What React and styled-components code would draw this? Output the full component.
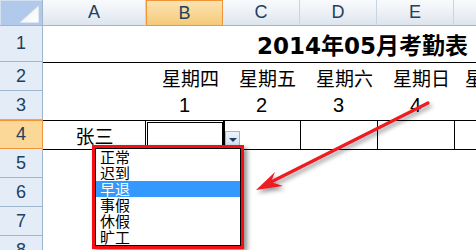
import React from "react";
import styled, { createGlobalStyle, css } from "styled-components";

const GlobalStyle = createGlobalStyle`
  html, body { margin: 0; padding: 0; background: #fff; }
  body { overflow: hidden; }
  * { box-sizing: border-box; }
`;

const Page = styled.div`
  position: relative;
  width: 476px;
  height: 250px;
  overflow: hidden;
  background: #fff;
`;

const Sheet = styled.div`
  display: grid;
  grid-template-columns: 43px 103px 77px 77px 77px 77px 100px;
  grid-template-rows: 26px 36px 29px 29px 29px 29px 29px 29px 29px;
`;

const Corner = styled.div`
  display: flex;
  align-items: flex-end;
  justify-content: flex-end;
  padding: 0 3px 2px 0;
  background: #b1c9ea;
  border-right: 1px solid #9eb6ce;
  border-bottom: 1px solid #9eb6ce;
  box-shadow: inset 1px 1px 0 #d3e0f1;
`;

const ColHeader = styled.div`
  display: flex;
  align-items: center;
  justify-content: center;
  font: 18px "Liberation Sans", Arial, sans-serif;
  color: #213f5f;
  border-right: 1px solid #c9d5e4;
  border-bottom: 1px solid #9eb6ce;
  background: linear-gradient(#f8fafc, #edf1f6 50%, #dde4ed);
  ${(p) =>
    p.$selected &&
    css`
      background: linear-gradient(#fbe2b0, #f9d796 50%, #f4c978);
      border: 1px solid #f29536;
    `}
`;

const RowHeader = styled.div`
  display: flex;
  align-items: center;
  justify-content: center;
  font: 18px "Liberation Sans", Arial, sans-serif;
  color: #213f5f;
  background: #e4ecf7;
  border-right: 1px solid #9eb6ce;
  border-bottom: 1px solid #9eb6ce;
  ${(p) =>
    p.$selected &&
    css`
      background: #fcd898;
      border: 1px solid #f29536;
      border-left: none;
    `}
`;

const Cell = styled.div`
  position: relative;
  display: flex;
  align-items: center;
  justify-content: ${(p) =>
    p.$align === "right" ? "flex-end" : p.$align === "left" ? "flex-start" : "center"};
  padding: 0 ${(p) => p.$pr || 0}px 0 ${(p) => p.$pl || 0}px;
  font-family: ${(p) =>
    p.$num ? '"Liberation Sans", Arial, sans-serif' : '"Noto Sans CJK SC", sans-serif'};
  font-size: ${(p) => (p.$num ? 20 : 19)}px;
  color: #000;
  white-space: nowrap;
  overflow: visible;
  ${(p) => p.$bt && "border-top: 1px solid #000;"}
  ${(p) => p.$bl && "border-left: 1px solid #000;"}
  ${(p) =>
    p.$selected &&
    css`
      &::after {
        content: "";
        position: absolute;
        left: -1px;
        top: -1px;
        right: -2px;
        bottom: -2px;
        border: 1px solid #000;
        box-shadow: inset 0 0 0 1px #fff, inset 0 0 0 2px #000;
      }
    `}
`;

const TitleCell = styled.div`
  grid-column: 2 / -1;
  display: flex;
  align-items: center;
  padding-left: 214px;
  font-family: "DejaVu Sans", "Noto Sans CJK SC", sans-serif;
  font-weight: bold;
  font-size: 23px;
  color: #000;
  white-space: nowrap;
`;

const DropButton = styled.div`
  position: absolute;
  left: 225px;
  top: 131px;
  width: 15px;
  height: 15px;
  border: 1px solid #9fb5d1;
  background: linear-gradient(#eef4fb, #d3e1f3);
  display: flex;
  align-items: center;
  justify-content: center;
  padding-top: 2px;

  &::before {
    content: "";
    width: 0;
    height: 0;
    border-left: 4px solid transparent;
    border-right: 4px solid transparent;
    border-top: 4px solid #1f3c6c;
  }
`;

const ListBox = styled.div`
  position: absolute;
  left: 92px;
  top: 145px;
  width: 152px;
  height: 104px;
  border: 3px solid #f40f14;
  box-shadow: 3px 3px 5px rgba(0, 0, 0, 0.45);
  background: #fff;
`;

const List = styled.ul`
  margin: 0;
  padding: 0;
  list-style: none;
  height: 100%;
  border: 1px solid #000;
  background: #fff;
`;

const Item = styled.li`
  height: 16px;
  line-height: 16px;
  padding-left: 4px;
  font-family: "Noto Sans CJK SC", sans-serif;
  font-size: 15px;
  color: ${(p) => (p.$active ? "#fff" : "#000")};
  background: ${(p) => (p.$active ? "#3399ff" : "transparent")};
  white-space: nowrap;
`;

const ArrowLayer = styled.svg`
  position: absolute;
  left: 0;
  top: 0;
  width: 476px;
  height: 250px;
  pointer-events: none;
`;

const cols = ["A", "B", "C", "D", "E", "F"];
const weekdays = ["星期四", "星期五", "星期六", "星期日"];
const options = ["正常", "迟到", "早退", "事假", "休假", "旷工"];

export default function App() {
  return (
    <Page>
      <GlobalStyle />
      <Sheet>
        <Corner>
          <svg width="20" height="18" viewBox="0 0 20 18">
            <defs>
              <linearGradient id="tri" x1="0" y1="0" x2="1" y2="1">
                <stop offset="0" stopColor="#e9eef4" />
                <stop offset="1" stopColor="#ffffff" />
              </linearGradient>
            </defs>
            <polygon points="0,18 20,0 20,18" fill="url(#tri)" stroke="#c4d2e4" strokeWidth="1" />
          </svg>
        </Corner>
        {cols.map((c) => (
          <ColHeader key={c} $selected={c === "B"}>
            {c}
          </ColHeader>
        ))}

        {/* Row 1 */}
        <RowHeader>1</RowHeader>
        <TitleCell>2014年05月考勤表</TitleCell>

        {/* Row 2 */}
        <RowHeader>2</RowHeader>
        <Cell $bt />
        {weekdays.map((w) => (
          <Cell key={w} $bt $align="right" $pr={4}>
            {w}
          </Cell>
        ))}
        <Cell $bt $align="left" $pl={11}>
          星期一
        </Cell>

        {/* Row 3 */}
        <RowHeader>3</RowHeader>
        <Cell />
        {[1, 2, 3, 4].map((n) => (
          <Cell key={n} $num>
            {n}
          </Cell>
        ))}
        <Cell />

        {/* Row 4 */}
        <RowHeader $selected>4</RowHeader>
        <Cell $bt>张三</Cell>
        <Cell $bt $selected />
        <Cell $bt $bl />
        <Cell $bt $bl />
        <Cell $bt $bl />
        <Cell $bt $bl />

        {/* Rows 5-8 */}
        {[5, 6, 7, 8].map((r) => (
          <React.Fragment key={r}>
            <RowHeader>{r}</RowHeader>
            {cols.map((c) => (
              <Cell key={c} $bt={r === 5} />
            ))}
          </React.Fragment>
        ))}
      </Sheet>

      <DropButton />

      <ListBox>
        <List>
          {options.map((o) => (
            <Item key={o} $active={o === "早退"}>
              {o}
            </Item>
          ))}
        </List>
      </ListBox>

      <ArrowLayer viewBox="0 0 476 250">
        <defs>
          <filter id="arrowShadow" x="-20%" y="-20%" width="140%" height="140%">
            <feDropShadow dx="2" dy="3" stdDeviation="2" floodColor="#000" floodOpacity="0.4" />
          </filter>
        </defs>
        <g filter="url(#arrowShadow)">
          <line x1="428" y1="103" x2="271" y2="182" stroke="#ec1c24" strokeWidth="3.2" strokeLinecap="round" />
          <polygon points="256,190 275,172 271,182 283,186" fill="#ec1c24" />
        </g>
      </ArrowLayer>
    </Page>
  );
}
